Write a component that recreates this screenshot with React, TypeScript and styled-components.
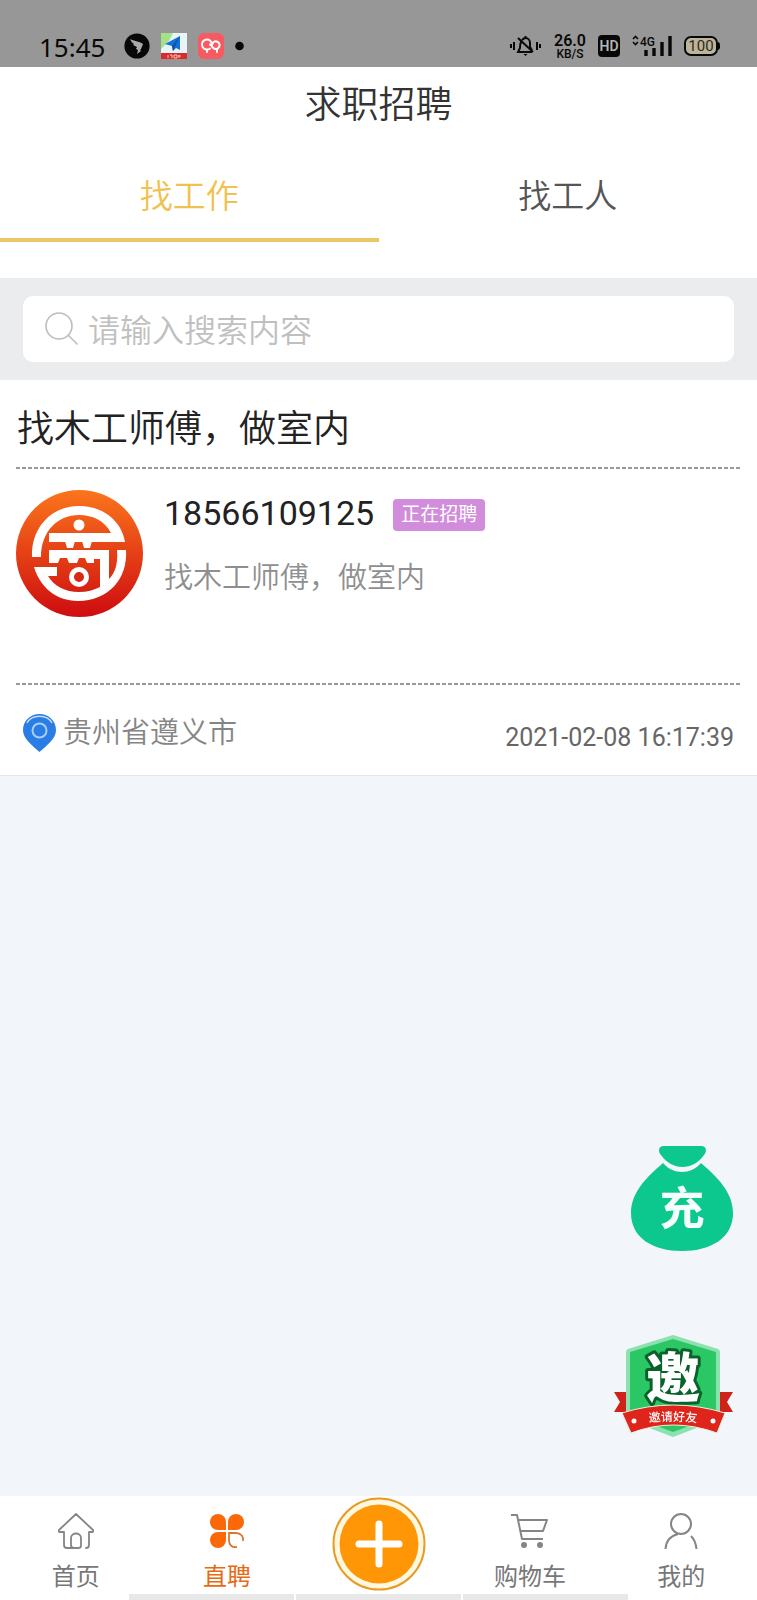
import React from "react";
import styled, { createGlobalStyle } from "styled-components";

const GlobalStyle = createGlobalStyle`
  *, *::before, *::after { box-sizing: border-box; }
  body {
    margin: 0;
    background: #f2f5fa;
    color: #222;
    font-family: Roboto, "Noto Sans CJK SC", sans-serif;
  }
  button, input { font: inherit; border: 0; padding: 0; background: none; }
  a { color: inherit; text-decoration: none; }
  h1, h2, h3, p { margin: 0; font-weight: 400; }
  svg { display: block; flex: none; }
`;

const Page = styled.div`
  display: flex;
  flex-direction: column;
  min-height: 100vh;
`;

const StatusBar = styled.div`
  display: flex;
  align-items: flex-end;
  justify-content: space-between;
  height: 67px;
  padding: 0 37px 6px 39px;
  background: #979797;
  color: #080808;
`;

const StatusGroup = styled.div<{ $gap: number }>`
  display: flex;
  align-items: center;
  gap: ${(p) => p.$gap}px;
  height: 30px;
`;

const Clock = styled.time`
  margin-right: 8px;
  padding-top: 2px;
  font-family: "Noto Sans", sans-serif;
  font-size: 26px;
  line-height: 30px;
`;

const NetSpeed = styled.div`
  display: flex;
  flex-direction: column;
  align-items: center;
  font-size: 12px;
  font-weight: 500;
  line-height: 12px;

  strong {
    font-size: 16px;
    font-weight: 600;
    line-height: 15px;
  }
`;

const Header = styled.header`
  background: #fff;
`;

const PageTitle = styled.h1`
  padding: 12px 0 8px;
  color: #333;
  font-size: 37px;
  font-weight: 350;
  line-height: 54px;
  text-align: center;
`;

const Tabs = styled.div`
  display: flex;
  padding: 6px 0 36px;
`;

const Tab = styled.button<{ $active?: boolean }>`
  flex: 1;
  height: 95px;
  padding-top: 2px;
  border-bottom: 4px solid ${(p) => (p.$active ? "#ecc565" : "transparent")};
  color: ${(p) => (p.$active ? "#efc24f" : "#555")};
  font-size: 33px;
  font-weight: 350;
`;

const SearchArea = styled.form`
  padding: 18px 23px;
  background: #ebecee;
`;

const SearchBox = styled.label`
  display: flex;
  align-items: center;
  gap: 9px;
  height: 66px;
  padding: 0 22px;
  border-radius: 10px;
  background: #fff;
`;

const SearchInput = styled.input`
  flex: 1;
  min-width: 0;
  height: 52px;
  padding-top: 4px;
  outline: 0;
  color: #333;
  font-size: 32px;
  font-weight: 350;

  &::placeholder { color: #c0c0c0; opacity: 1; }
`;

const JobCard = styled.article`
  padding: 0 16px;
  border-bottom: 1px solid #e4e6e8;
  background: #fff;
`;

const JobTitle = styled.h2`
  padding: 22px 1px 9px;
  font-size: 37px;
  font-weight: 350;
  line-height: 56px;
`;

const DashedRule = styled.div`
  height: 2px;
  background: repeating-linear-gradient(90deg, #999 0 4px, transparent 4px 6px);
`;

const JobBody = styled.div`
  display: flex;
  gap: 21px;
  height: 214px;
  padding-top: 21px;
`;

const JobInfo = styled.div`
  display: flex;
  flex-direction: column;
  gap: 21px;
`;

const PhoneRow = styled.div`
  display: flex;
  align-items: center;
  gap: 19px;
`;

const Phone = styled.h3`
  font-size: 34px;
  line-height: 46px;
`;

const StatusTag = styled.span`
  margin-top: 4px;
  padding: 0 8px;
  border-radius: 4px;
  background: #d18cdb;
  color: #fff;
  font-size: 19px;
  line-height: 32px;
`;

const Description = styled.p`
  color: #8f8f8f;
  font-size: 29px;
  font-weight: 350;
  line-height: 42px;
`;

const JobFooter = styled.footer`
  display: flex;
  align-items: center;
  justify-content: space-between;
  height: 90px;
  padding: 8px 7px 0;
`;

const Place = styled.span`
  display: flex;
  align-items: center;
  gap: 7px;
  color: #858585;
  font-size: 29px;
  font-weight: 350;
  line-height: 40px;
`;

const PlaceName = styled.span`
  padding-bottom: 2px;
`;

const Posted = styled.time`
  padding-top: 8px;
  color: #666;
  font-size: 25px;
  line-height: 32px;
`;

const FloatingActions = styled.div`
  position: fixed;
  right: 24px;
  bottom: 162px;
  display: flex;
  flex-direction: column;
  align-items: flex-end;
  gap: 82px;
`;

const FloatingButton = styled.button`
  display: block;
  cursor: pointer;
`;

const TabBar = styled.nav`
  position: sticky;
  bottom: 0;
  display: flex;
  height: 104px;
  margin-top: auto;
  background: #fff;
`;

const NavItem = styled.a<{ $active?: boolean }>`
  display: flex;
  flex: 1;
  flex-direction: column;
  align-items: center;
  gap: 10px;
  padding-top: 17px;
  color: ${(p) => (p.$active ? "#e56a14" : "#777")};
  font-size: 24px;
  line-height: 36px;
`;

const PublishButton = styled.button`
  display: flex;
  flex: 1;
  justify-content: center;
  align-items: flex-start;
  padding-top: 1px;
`;

const GestureHint = styled.div`
  position: absolute;
  bottom: 0;
  left: 17%;
  right: 17%;
  display: flex;
  gap: 2px;
  height: 6px;

  i { flex: 1; background: #e9e8e8; }
`;

function StatusIcons() {
  return (
    <>
      <svg width="26" height="26" viewBox="0 0 26 26">
        <circle cx="13" cy="13" r="12.6" fill="#080808" />
        <path d="M6 6c4 2 9 2 13 5l-2 5-1 1 1 1-4 3 1-4-2-1 1-2-4-2 1-1C8 10 7 8 6 6Z" fill="#aaa" />
      </svg>
      <svg width="26" height="26" viewBox="0 0 26 26">
        <path d="M0 0h26v20H0Z" fill="#e8f4f5" />
        <path d="M0 0h12L8 8 0 16Z" fill="#a5e18a" />
        <path d="M19 3 4 11l7 2 1 5 3-3 4 2Z" fill="#1472d6" />
        <path d="M19 3 11 13l1 5Z" fill="#0c55aa" />
        <path d="M0 20h26v6H0Z" fill="#d92b2b" />
        <path d="M7 22v3m2-3h2v3m2-3h3v3h-3Zm5 0v3m-1-2h3" stroke="#ffc7b8" fill="none" />
      </svg>
      <svg width="26" height="26" viewBox="0 0 26 26">
        <rect width="26" height="26" rx="6" fill="#f75a60" />
        <g fill="none" stroke="#fff" strokeWidth="2" strokeLinecap="round">
          <path d="M12 15.500a5 5 0 1 1 1.500-6M9 17v2" />
          <path d="M14 12a3.800 3.800 0 1 1 2 3.500c-2-1-2-3-4-4M19 16v3" />
        </g>
      </svg>
      <svg width="9" height="26" viewBox="0 0 9 26">
        <circle cx="4.500" cy="13" r="4.300" fill="#080808" />
      </svg>
    </>
  );
}

function MuteIcon() {
  return (
    <svg width="33" height="24" viewBox="0 0 33 24" fill="none" stroke="#080808" strokeWidth="2">
      <path d="M2 10v4M5 8v8M28 8v8M31 10v4" />
      <path d="M12 8c-1 2-1 4-1 6l-2 4h14M13 6c1-1 2-2 3.500-2C19 4 21 6 21 9v4l2 3M16.500 2v2M9 4l15 14" />
      <path d="M14.500 20h4l-2 2Z" fill="#080808" stroke="none" />
    </svg>
  );
}

function HdIcon() {
  return (
    <svg width="22" height="22" viewBox="0 0 22 22">
      <rect width="22" height="22" rx="4" fill="#080808" />
      <text x="11" y="16" textAnchor="middle" fontSize="14" fontWeight="600" fill="#b5b5b5">HD</text>
    </svg>
  );
}

function SignalIcon() {
  return (
    <svg width="40" height="26" viewBox="0 -2 40 26">
      <path d="m1 4 2.500-2.500L6 4M1 7l2.500 2.500L6 7" fill="none" stroke="#080808" strokeWidth="1.600" />
      <text x="8" y="11" fontSize="12" fontWeight="500" fill="#080808">4G</text>
      <path d="M14 21v-6M22 21v-8M30 21V7M38 21V1" stroke="#080808" strokeWidth="3.400" />
    </svg>
  );
}

function BatteryIcon() {
  return (
    <svg width="36" height="20" viewBox="0 0 36 20">
      <rect x="1" y="1" width="32" height="18" rx="6" fill="#bdb49c" stroke="#080808" strokeWidth="2" />
      <path d="M34 6c3 1 3 7 0 8Z" fill="#080808" />
      <text x="17" y="15" textAnchor="middle" fontSize="15" fill="#2c2920">100</text>
    </svg>
  );
}

function SearchIcon() {
  return (
    <svg width="34" height="34" viewBox="0 0 34 34" fill="none" stroke="#bdbdbd" strokeWidth="1.600">
      <circle cx="14" cy="14" r="13" />
      <path d="m23.500 23.500 9 9" />
    </svg>
  );
}

function Avatar() {
  return (
    <svg width="127" height="127" viewBox="0 0 127 127" role="img" aria-label="头像">
      <defs>
        <linearGradient id="avatarFill" x1="0" y1="0" x2="0" y2="1">
          <stop offset="0" stopColor="#fb751c" />
          <stop offset="1" stopColor="#ce0c10" />
        </linearGradient>
      </defs>
      <circle cx="63.500" cy="63.500" r="63.500" fill="url(#avatarFill)" />
      <g fill="#fff">
        <path d="M16 67C15 38 35 16 63 16c25 0 43 16 46 36H33v-9h62C89 31 77 25 63 25c-22 0-38 17-38 42Z" />
        <path d="M49 51h10l-2 7h-6ZM66 51h10l-2 7h-6Z" />
        <circle cx="63" cy="35" r="5.500" />
        <path d="M33 60h60v29c7-7 9-17 8-29h9c2 29-18 51-48 51-22 0-38-14-44-34h23v9H32c6 10 17 16 31 16 8 0 15-2 21-5V69h-6v4h-7l-2-5h-6l-2 5h-8l-2-5h-7l-2 5h-9Z" />
      </g>
      <circle cx="63" cy="87" r="7.500" fill="none" stroke="#fff" strokeWidth="5" />
      <path d="m63 82 5 5-5 5-5-5Z" fill="#d82914" />
    </svg>
  );
}

function PinIcon() {
  return (
    <svg width="33" height="40" viewBox="0 0 33 40">
      <path d="M16.500 0C7 0 0 7 0 16c0 9 9 15 16.500 22C24 31 33 25 33 16 33 7 26 0 16.500 0Z" fill="#2b7de6" />
      <path d="M4 9C9 0 24 0 29 9" fill="none" stroke="#c1dcf7" strokeWidth="1.500" />
      <circle cx="16.500" cy="16.500" r="7" fill="none" stroke="#a9cff8" strokeWidth="2" />
    </svg>
  );
}

function MoneyBagIcon() {
  return (
    <svg width="102" height="106" viewBox="0 0 102 106">
      <path d="M33 0h37c6 0 6 6 3 9-11 16-32 16-43 0-3-3-3-9 3-9Z" fill="#0cc78e" />
      <path d="M32 17c10 12 28 12 38 0 16 14 32 29 32 50 0 25-22 38-51 38S0 92 0 67c0-21 16-36 32-50Z" fill="#0cc78e" />
      <text x="51" y="79" textAnchor="middle" fontSize="45" fontWeight="700" fill="#f4fffb">充</text>
    </svg>
  );
}

function InviteIcon() {
  return (
    <svg width="119" height="104" viewBox="0 0 119 104">
      <path d="M0 58h22v20H0l6-10ZM119 58H97v20h22l-6-10Z" fill="#cf2218" />
      <path d="m59 1 45 14q2 1 2 3v67L59 103 12 85V18q0-2 2-3Z" fill="#8be2af" />
      <path d="m59 5 43 13v64L59 98 16 82V18Z" fill="#2bc765" />
      <text x="59" y="64" textAnchor="middle" fontSize="54" fontWeight="900" fill="#fff" stroke="#09622c" strokeWidth="6" strokeLinejoin="round" paintOrder="stroke">邀</text>
      <path d="M8 79Q59 63 111 79l-8 20Q59 83 17 99Z" fill="#df251b" stroke="#eef0dc" strokeWidth="1" />
      <path id="inviteCurve" d="M14 92Q59 82 104 92" fill="none" />
      <text fontSize="12" fontWeight="500" fill="#fff" textAnchor="middle">
        <textPath href="#inviteCurve" startOffset="50%">邀请好友</textPath>
      </text>
      <circle cx="20" cy="87" r="2.500" fill="#fff" />
      <circle cx="99" cy="87" r="2.500" fill="#fff" />
    </svg>
  );
}

function HomeIcon() {
  return (
    <svg width="36" height="36" viewBox="0 0 36 36" fill="none" stroke="#858585" strokeWidth="1.800" strokeLinecap="round" strokeLinejoin="round">
      <path d="M6 19v13q0 3 3 3h7q-3 0-3-3v-7c0-6 10-6 10 0v8q0 2-3 2h-4M6 19H2q-2 0-1-2L18 1l17 16q1 2-1 2h-3v13q0 3-3 3" />
    </svg>
  );
}

function CloverIcon() {
  return (
    <svg width="36" height="36" viewBox="0 0 36 36">
      <g fill="#fb6807">
        <path d="M17 17V9a8 8 0 1 0-8 8Z" />
        <path d="M19 17V9a8 8 0 1 1 8 8Z" />
        <path d="M17 19H9a8 8 0 1 0 8 8Z" />
      </g>
      <path d="M28 34c-5 1-8-2-8-7v-7h7c5 0 8 4 7 8" fill="none" stroke="#d77831" strokeWidth="1.800" />
    </svg>
  );
}

function PlusIcon() {
  return (
    <svg width="94" height="94" viewBox="0 0 94 94">
      <circle cx="47" cy="47" r="45.500" fill="#fff8df" stroke="#e79c25" strokeWidth="2" />
      <circle cx="47" cy="47" r="39.500" fill="#ff9605" />
      <path d="M47 27v40M27 47h40" stroke="#fff" strokeWidth="7" strokeLinecap="round" />
    </svg>
  );
}

function CartIcon() {
  return (
    <svg width="37" height="36" viewBox="0 0 37 36" fill="none" stroke="#858585" strokeWidth="2" strokeLinejoin="round">
      <path d="M0 2h6l5 24h21M8 7h28l-4 11H10" />
      <circle cx="13" cy="32" r="3" fill="#858585" stroke="none" />
      <circle cx="29" cy="32" r="3" fill="#858585" stroke="none" />
    </svg>
  );
}

function UserIcon() {
  return (
    <svg width="34" height="36" viewBox="0 0 34 36" fill="none" stroke="#858585" strokeWidth="2">
      <circle cx="17" cy="11" r="10" />
      <path d="M14 21C6 23 2 28 1.500 36M27 23c3 3 5 8 5.500 13" />
    </svg>
  );
}

export default function App() {
  return (
    <Page>
      <GlobalStyle />
      <StatusBar>
        <StatusGroup $gap={11}>
          <Clock>15:45</Clock>
          <StatusIcons />
        </StatusGroup>
        <StatusGroup $gap={12}>
          <MuteIcon />
          <NetSpeed>
            <strong>26.0</strong>
            <span>KB/S</span>
          </NetSpeed>
          <HdIcon />
          <SignalIcon />
          <BatteryIcon />
        </StatusGroup>
      </StatusBar>

      <Header>
        <PageTitle>求职招聘</PageTitle>
        <Tabs role="tablist">
          <Tab type="button" role="tab" aria-selected="true" $active>找工作</Tab>
          <Tab type="button" role="tab" aria-selected="false">找工人</Tab>
        </Tabs>
      </Header>

      <main>
        <SearchArea role="search">
          <SearchBox>
            <SearchIcon />
            <SearchInput type="text" aria-label="搜索" placeholder="请输入搜索内容" />
          </SearchBox>
        </SearchArea>

        <JobCard>
          <JobTitle>找木工师傅，做室内</JobTitle>
          <DashedRule />
          <JobBody>
            <Avatar />
            <JobInfo>
              <PhoneRow>
                <Phone>18566109125</Phone>
                <StatusTag>正在招聘</StatusTag>
              </PhoneRow>
              <Description>找木工师傅，做室内</Description>
            </JobInfo>
          </JobBody>
          <DashedRule />
          <JobFooter>
            <Place>
              <PinIcon />
              <PlaceName>贵州省遵义市</PlaceName>
            </Place>
            <Posted>2021-02-08 16:17:39</Posted>
          </JobFooter>
        </JobCard>
      </main>

      <FloatingActions>
        <FloatingButton type="button" aria-label="充值"><MoneyBagIcon /></FloatingButton>
        <FloatingButton type="button" aria-label="邀请好友"><InviteIcon /></FloatingButton>
      </FloatingActions>

      <TabBar>
        <NavItem href="#home"><HomeIcon />首页</NavItem>
        <NavItem href="#jobs" $active><CloverIcon />直聘</NavItem>
        <PublishButton type="button" aria-label="发布"><PlusIcon /></PublishButton>
        <NavItem href="#cart"><CartIcon />购物车</NavItem>
        <NavItem href="#me"><UserIcon />我的</NavItem>
        <GestureHint><i /><i /><i /></GestureHint>
      </TabBar>
    </Page>
  );
}
